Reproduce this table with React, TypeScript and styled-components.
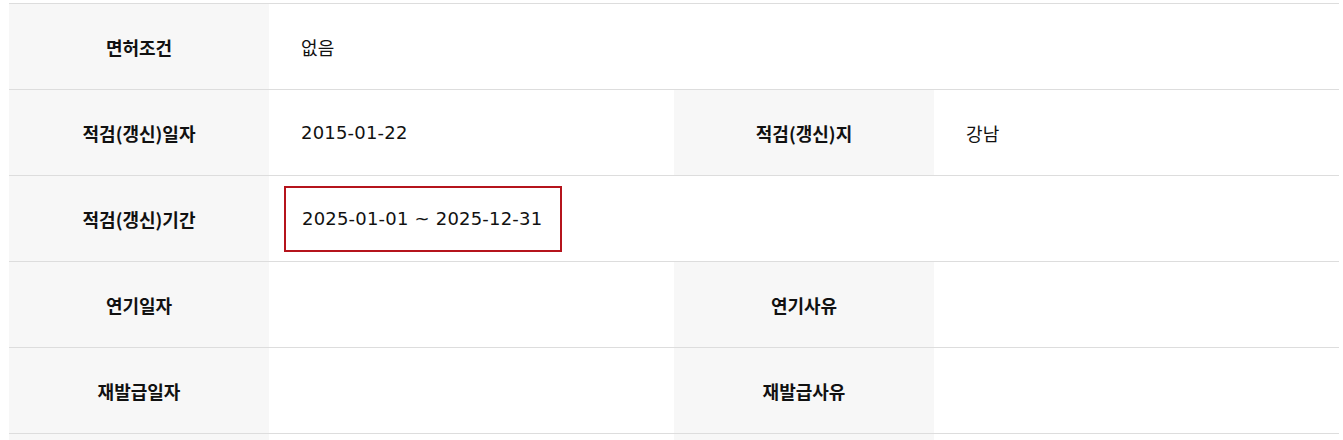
import React from "react";
import styled, { createGlobalStyle } from "styled-components";

const GlobalStyle = createGlobalStyle`
  html, body { margin: 0; padding: 0; background: #fff; }
  body { font-family: "Noto Sans CJK KR", "Noto Sans", sans-serif; color: #111; }
`;

const Wrapper = styled.div`
  padding: 3px 4px 0 9px;
`;

const Table = styled.div`
  border-top: 1px solid #dddddd;
  display: grid;
  grid-template-columns: 260px 405px 260px 1fr;
`;

const Row = styled.div`
  display: contents;
`;

const LabelCell = styled.div`
  height: 85px;
  border-bottom: 1px solid #dddddd;
  background: #f7f7f7;
  display: flex;
  align-items: center;
  justify-content: center;
  font-size: 18px;
  font-weight: 600;
  color: #111;
`;

const ValueCell = styled.div<{ $span?: number }>`
  height: 85px;
  border-bottom: 1px solid #dddddd;
  background: #fff;
  display: flex;
  align-items: center;
  padding-left: 32px;
  font-family: "DejaVu Sans", "Noto Sans CJK KR", sans-serif;
  font-size: 18px;
  letter-spacing: 0.2px;
  font-weight: 400;
  color: #111;
  grid-column: span ${(p) => p.$span ?? 1};
`;

const Highlight = styled.span`
  display: inline-flex;
  align-items: center;
  height: 62px;
  padding: 0 18px 0 16px;
  margin-left: -17px;
  border: 2px solid #b5141c;
`;

export default function App() {
  return (
    <>
      <GlobalStyle />
      <Wrapper>
        <Table>
          <Row>
            <LabelCell>면허조건</LabelCell>
            <ValueCell $span={3}>없음</ValueCell>
          </Row>
          <Row>
            <LabelCell>적검(갱신)일자</LabelCell>
            <ValueCell>2015-01-22</ValueCell>
            <LabelCell>적검(갱신)지</LabelCell>
            <ValueCell>강남</ValueCell>
          </Row>
          <Row>
            <LabelCell>적검(갱신)기간</LabelCell>
            <ValueCell $span={3}>
              <Highlight>2025-01-01 ~ 2025-12-31</Highlight>
            </ValueCell>
          </Row>
          <Row>
            <LabelCell>연기일자</LabelCell>
            <ValueCell />
            <LabelCell>연기사유</LabelCell>
            <ValueCell />
          </Row>
          <Row>
            <LabelCell>재발급일자</LabelCell>
            <ValueCell />
            <LabelCell>재발급사유</LabelCell>
            <ValueCell />
          </Row>
          <Row>
            <LabelCell />
            <ValueCell />
            <LabelCell />
            <ValueCell />
          </Row>
        </Table>
      </Wrapper>
    </>
  );
}
